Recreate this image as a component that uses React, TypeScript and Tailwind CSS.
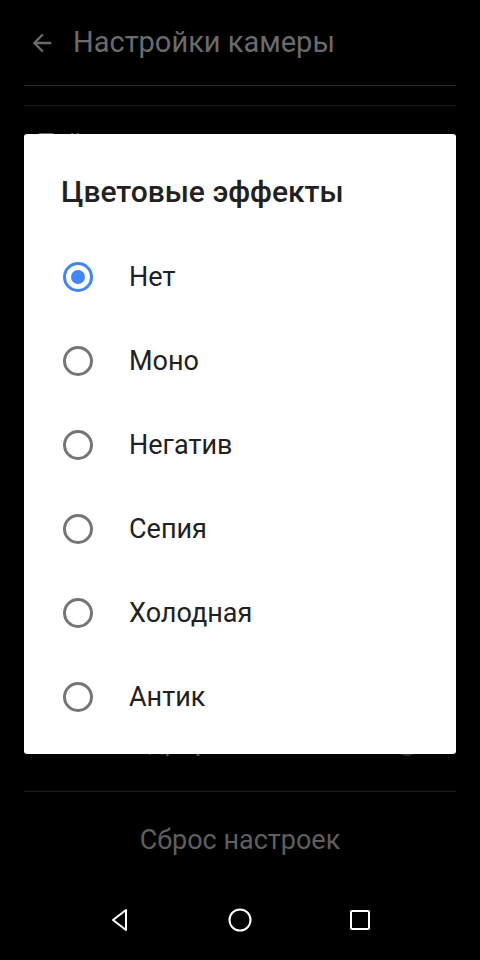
import { useState } from "react";

const EFFECTS = ["Нет", "Моно", "Негатив", "Сепия", "Холодная", "Антик"];

function Radio({ checked }: { checked: boolean }) {
  return (
    <span
      className={
        "flex h-[30px] w-[30px] shrink-0 items-center justify-center rounded-full border-[3px] " +
        (checked ? "border-[#4285f4]" : "border-[#757575]")
      }
    >
      {checked && <span className="h-[14px] w-[14px] rounded-full bg-[#4285f4]" />}
    </span>
  );
}

export default function App() {
  const [selected, setSelected] = useState(0);

  return (
    <div className="relative h-[960px] w-[480px] overflow-hidden bg-black font-['Roboto',sans-serif]">
      {/* dimmed settings screen */}
      <div className="flex h-[85px] items-center pl-[28px]">
        <svg width="28" height="28" viewBox="0 0 24 24" className="shrink-0">
          <path d="M20 11H7.83l5.59-5.59L12 4l-8 8 8 8 1.41-1.41L7.83 13H20v-2z" fill="#6b6b6b" />
        </svg>
        <span className="ml-[17px] text-[29px] text-[#6b6b6b]">Настройки камеры</span>
      </div>
      <div className="mx-[24px] h-[21px] border-y border-t-[#2e2e2e] border-b-[#1c1c1c]" />
      <div className="mx-[24px] h-[84px] pl-[14px] pt-[20px] text-[27px] leading-[36px] text-[#6b6b6b]">
        Таймер
      </div>

      <div className="absolute left-[24px] right-[24px] top-[707px] flex h-[85px] items-center justify-between border-b border-[#1e1e1e] pb-[16px] pl-[14px] pr-[34px] text-[27px] text-[#6b6b6b]">
        <span>Сетка кадрирования</span>
        <span className="h-[30px] w-[30px] rounded-full bg-[#3a3a3a]" />
      </div>

      <div className="absolute left-0 right-0 top-[820px] text-center text-[27px] leading-[40px] text-[#5f5f5f]">
        Сброс настроек
      </div>

      {/* nav bar */}
      <div className="absolute bottom-0 left-0 right-0 flex h-[80px] items-center justify-center gap-[90px] pb-[1px]">
        <svg width="30" height="30" viewBox="0 0 30 30">
          <path d="M21 5 L8 15 L21 25 Z" fill="none" stroke="#fff" strokeWidth="2" strokeLinejoin="round" />
        </svg>
        <svg width="30" height="30" viewBox="0 0 30 30">
          <circle cx="15" cy="15" r="10.5" fill="none" stroke="#fff" strokeWidth="2" />
        </svg>
        <svg width="30" height="30" viewBox="0 0 30 30">
          <rect x="6" y="6" width="18" height="18" rx="1" fill="none" stroke="#fff" strokeWidth="2" />
        </svg>
      </div>

      {/* dialog */}
      <div className="absolute left-[24px] top-[134px] h-[620px] w-[432px] rounded-[3px] bg-white shadow-2xl">
        <div className="pl-[37px] pt-[40px] text-[30px] font-medium leading-[36px] text-[#212121]">
          Цветовые эффекты
        </div>
        <div className="mt-[25px]">
          {EFFECTS.map((e, i) => (
            <button
              key={e}
              onClick={() => setSelected(i)}
              className="flex h-[84px] w-full items-center pl-[39px] text-left"
            >
              <Radio checked={selected === i} />
              <span className="ml-[36px] text-[27px] leading-[36px] text-[#212121]">{e}</span>
            </button>
          ))}
        </div>
      </div>
    </div>
  );
}
